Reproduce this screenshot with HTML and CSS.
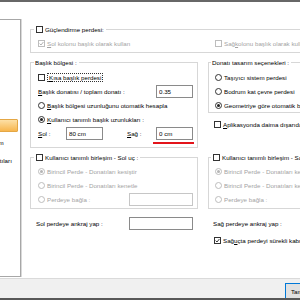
FILE: index.html
```html
<!DOCTYPE html>
<html lang="tr">
<head>
    <meta charset="UTF-8">
    <meta name="viewport" content="width=device-width, initial-scale=1.0">
    <title>Perde Başlık Ayarları</title>
    <link rel="stylesheet" href="styles.css">
</head>
<body>

    <div class="topbar"></div>

    <div class="content">
        <div class="sidebar">
            <div class="tree">
                <div class="node selected"><span></span></div>
                <div class="node"><span>Perde donatım</span></div>
                <div class="node"><span>Perde bağlantıları</span></div>
            </div>
        </div>

        <div class="page">
            <fieldset class="group group-wide">
                <legend class="check-legend"><span class="legend-line"><span class="box"></span>Güçlendirme perdesi:</span></legend>
                <div class="split">
                    <div class="row off"><span class="box"><svg viewBox="0 0 5 5"><polyline points="0.6,2.6 2,4 4.4,1"/></svg></span><u>S</u>ol kolonu başlık olarak kullan</div>
                    <div class="row off"><span class="box"></span>Sağ <u>k</u>olonu başlık olarak kullan</div>
                </div>
            </fieldset>

            <div class="columns">
                <fieldset class="group group-head">
                    <legend><span class="legend-line">Başlık bölgesi :</span></legend>
                    <div class="row"><span class="box"></span><span class="focus"><u>K</u>ısa başlık perdesi</span></div>
                    <div class="row spread"><span><u>B</u>aşlık donatısı / toplam donatı :</span><input class="field" type="text" value="0.35"></div>
                    <div class="row"><span class="radio"></span><u>B</u>aşlık bölgesi uzunluğunu otomatik hesapla</div>
                    <div class="row"><span class="radio on"></span><u>K</u>ullanıcı tanımlı başlık uzunlukları :</div>
                    <div class="row">
                        <span class="side-label"><u>S</u>ol :</span>
                        <input class="field" type="text" value="80 cm">
                        <span class="side-label right-label"><u>S</u>ağ :</span>
                        <span class="marked"><input class="field" type="text" value="0 cm"></span>
                    </div>
                </fieldset>

                <div class="stack">
                    <fieldset class="group group-design">
                        <legend><span class="legend-line">Donatı tasarım seçenekleri :</span></legend>
                        <div class="row"><span class="radio"></span>Taşıyıcı sistem perdesi</div>
                        <div class="row"><span class="radio"></span>Bodrum kat çevre perdesi</div>
                        <div class="row"><span class="radio on"></span>Geometriye göre otomatik belirle</div>
                    </fieldset>
                    <div class="row apl"><span class="box"></span><u>A</u>plikasyonda daima dışarıdan göster</div>
                </div>

                <fieldset class="group group-joint">
                    <legend class="check-legend"><span class="legend-line"><span class="box"></span>Kullanıcı tanımlı birleşim - Sol uç :</span></legend>
                    <div class="row off"><span class="radio on"></span>Birincil Perde - Donatıları kesiştir</div>
                    <div class="row off"><span class="radio"></span>Birincil Perde - Donatıları kenetle</div>
                    <div class="row off spread"><span class="radio-label"><span class="radio"></span>Perdeye bağla :</span><input class="field long" type="text" disabled></div>
                </fieldset>

                <fieldset class="group group-joint group-right">
                    <legend class="check-legend"><span class="legend-line"><span class="box"></span>Kullanıcı tanımlı birleşim - Sağ uç :</span></legend>
                    <div class="row off"><span class="radio on"></span>Birincil Perde - Donatıları kesiştir</div>
                    <div class="row off"><span class="radio"></span>Birincil Perde - Donatıları kenetle</div>
                    <div class="row off spread"><span class="radio-label"><span class="radio"></span>Perdeye bağla :</span><input class="field long" type="text" disabled></div>
                </fieldset>

                <div class="row spread anchor">Sol perdeye ankraj yap :<input class="field long" type="text"></div>
                <div class="row spread anchor anchor-right">Sağ perdeye ankraj yap :<input class="field long" type="text"></div>

                <div class="row last"><span class="box"><svg viewBox="0 0 5 5"><polyline points="0.6,2.6 2,4 4.4,1"/></svg></span>Sağ <u>u</u>çta perdeyi sürekli kabul et</div>
            </div>
        </div>
    </div>

    <div class="footer">
        <button class="ok">Tamam</button>
    </div>

    <div class="taskbar"></div>

</body>
</html>
```

FILE: styles.css
```css
/* General Styling */
* {
    box-sizing: border-box;
}

body {
    margin: 0;
    width: 300px;
    height: 300px;
    overflow: hidden;
    background: #f0f0f0;
    font-family: "Liberation Sans", Arial, sans-serif;
    font-size: 6.2px;
    color: #000;
}

.topbar {
    height: 2px;
    background: #676767;
}

.taskbar {
    height: 2px;
    background: #585858;
}

.content {
    display: flex;
    align-items: flex-start;
    height: 276px;
    background: #fff;
}

/* Left tree */
.sidebar {
    flex-shrink: 0;
    width: 21px;
    height: 258px;
    margin-top: 17px;
    border: 1px solid #a7a7a7;
    border-left: none;
    box-shadow: 1px 0 0 #d9d9d9;
    overflow: hidden;
}

.tree {
    padding-top: 97px;
}

.node {
    height: 18px;
    padding: 2px 2px 3px 0;
}

.node span {
    display: block;
    height: 13px;
    line-height: 12px;
    margin-left: -37px;
    white-space: nowrap;
}

.node.selected span {
    background: linear-gradient(#fde0a6, #f7b64e);
    border: 1px solid #e4a745;
    border-radius: 1px;
}

/* Settings page */
.page {
    flex: 1;
    min-width: 0;
    height: 100%;
    overflow: hidden;
    padding: 23px 0 0 9px;
}

.group {
    margin: 0;
    min-width: 0;
    border: 1px solid #d7d7d7;
}

.group legend {
    height: 9px;
    margin-left: -4px;
    padding: 0 2px 0 1px;
    line-height: 9px;
}

.group .check-legend {
    padding-left: 2px;
}

.legend-line {
    display: flex;
    align-items: center;
    height: 9px;
    white-space: nowrap;
}

.group-wide {
    width: 346px;
    padding: 2px 0 2px 7px;
}

.split {
    display: grid;
    grid-template-columns: 160px 1fr;
    column-gap: 17px;
}

.columns {
    display: grid;
    grid-template-columns: 168px 168px;
    column-gap: 10px;
    align-items: start;
    margin-top: 5px;
}

.group-head {
    padding: 3px 4px 7px 7px;
}

.group-design {
    padding: 3px 4px 0 6px;
}

.group-joint {
    margin-top: 5px;
    padding: 2px 4px 2px 7px;
}

.group-right {
    padding-left: 6px;
}

.row {
    display: flex;
    align-items: center;
    height: 14px;
    white-space: nowrap;
}

.spread {
    justify-content: space-between;
}

.off {
    color: #a3a3a3;
}

.apl {
    margin-top: 4px;
    padding-left: 6px;
}

.anchor {
    margin-top: 7px;
    padding: 0 5px 0 6px;
}

.anchor-right {
    padding-left: 5px;
}

.last {
    grid-column: 2;
    margin-top: 3px;
    padding-left: 6px;
}

/* Check boxes and radio buttons */
.box {
    display: flex;
    flex-shrink: 0;
    width: 7px;
    height: 7px;
    margin-right: 2px;
    border: 1px solid #333;
    background: #fff;
}

.box svg {
    width: 5px;
    height: 5px;
    fill: none;
    stroke: #222;
    stroke-width: 0.9;
}

.off .box {
    border-color: #bdbdbd;
}

.off .box svg {
    stroke: #a9a9a9;
}

.radio {
    display: flex;
    flex-shrink: 0;
    align-items: center;
    justify-content: center;
    width: 7px;
    height: 7px;
    margin-right: 2px;
    border: 1px solid #333;
    border-radius: 50%;
    background: #fff;
}

.radio.on::after {
    content: "";
    width: 3px;
    height: 3px;
    border-radius: 50%;
    background: #222;
}

.off .radio {
    border-color: #bdbdbd;
}

.off .radio.on::after {
    background: #b5b5b5;
}

.radio-label {
    display: flex;
    align-items: center;
}

.focus {
    height: 9px;
    padding: 0 1px;
    line-height: 7px;
    border: 1px dotted #333;
}

.side-label {
    width: 28px;
}

.right-label {
    width: 29px;
    margin-left: auto;
}

/* Text boxes */
.field {
    width: 37px;
    height: 13px;
    padding: 0 2px;
    border: 1px solid #8a8a8a;
    background: #fff;
    font: inherit;
    color: #000;
    outline: none;
}

.field.long {
    width: 64px;
}

.field:disabled {
    border-color: #c6c6c6;
    background: #fff;
}

.marked {
    position: relative;
    display: flex;
}

.marked::after {
    content: "";
    position: absolute;
    left: -3px;
    right: -1px;
    bottom: -4px;
    height: 2px;
    background: #e3141b;
}

/* Bottom buttons */
.footer {
    height: 20px;
    padding: 4px 0 0 285px;
    border-top: 1px solid #dadada;
    overflow: hidden;
    white-space: nowrap;
}

.ok {
    width: 50px;
    height: 16px;
    padding: 0 0 0 5px;
    border: 1px solid #0078d7;
    background: #e1e1e1;
    font: inherit;
    color: #000;
    text-align: left;
}
```
